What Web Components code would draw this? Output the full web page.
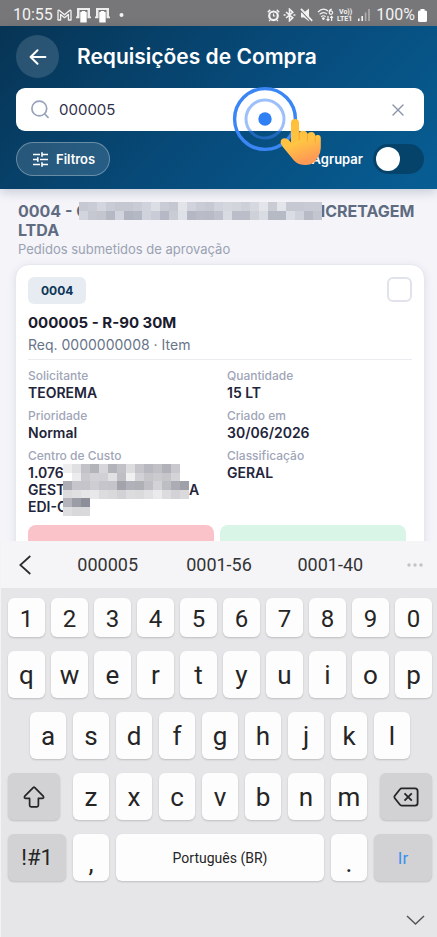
<!DOCTYPE html>
<html lang="pt-BR">
<head>
<meta charset="utf-8">
<meta name="viewport" content="width=device-width, initial-scale=1">
<title>Requisições de Compra</title>
<style>
html, body { margin: 0; height: 100%; }
body { font-family: Inter, "Liberation Sans", sans-serif; background: #f4f4f9; }
</style>
</head>
<body>
<phone-screen>
  <status-bar slot="status"></status-bar>
  <app-header slot="header" heading="Requisições de Compra">
    <search-field value="000005"></search-field>
    <filter-bar slot="tools"></filter-bar>
    <tap-hint slot="hint"></tap-hint>
  </app-header>
  <request-group>
    <request-card code="0004" heading="000005 - R-90 30M" sub="Req. 0000000008 · Item">
      <info-pair label="Solicitante">TEOREMA</info-pair>
      <info-pair label="Quantidade">15 LT</info-pair>
      <info-pair label="Prioridade">Normal</info-pair>
      <info-pair label="Criado em">30/06/2026</info-pair>
      <info-pair label="Centro de Custo">
        <masked-line lead="1.076"><pixel-mask cell="9" rows="eee e0e0e3 c2c2c8 b3b3ba d6d6db b3b3ba c1c1c7 dddde0 c5c5cb b8b8c0 c0c0c6 b1b1b9 c8c8ce/fff ececee cacace d2d2d6 d0d0d5 e1e1e4 bebec5 f0f0f1 d2d2d6 c5c5ca cacacf c5c5ca d3d3d8"></pixel-mask></masked-line>
        <masked-line lead="GEST" tail="A"><pixel-mask cell="9" rows="adadb5 c5c5cb c4c4ca cdcdd2 c5c5cb c4c4ca a3a3ac b1b1b9 afafb6 bfbfc5 d3d3d7 bdbdc4 abacb4 a0a0a9/dcdcdf e0e0e3 e6e6e8 e8e8ea dcdcdf d9d9dc d2d2d6 dcdcdf dadadd e1e1e4 eaeaec dcdcdf d3d3d7 dadadd"></pixel-mask></masked-line>
        <masked-line lead="EDI-C"><pixel-mask cell="9" rows="b3b3bb 9a9ca6 8c8f99/dedee1 d8d8db d9d9dc"></pixel-mask></masked-line>
      </info-pair>
      <info-pair label="Classificação">GERAL</info-pair>
    </request-card>
  </request-group>
  <soft-keyboard slot="keyboard"></soft-keyboard>
</phone-screen>

<script>
class Base extends HTMLElement {
  connectedCallback() {
    if (this.shadowRoot) return;
    this.attachShadow({ mode: 'open' }).innerHTML =
      '<style>:host,*{box-sizing:border-box}button,input{font:inherit;margin:0}svg{display:block;flex:none}' + this.css() + '</style>' + this.html();
  }
  css() { return ''; }
  html() { return '<slot></slot>'; }
  a(n) { return this.getAttribute(n) || ''; }
}
const def = (name, css, html) => customElements.define(name, class extends Base {
  css() { return css; }
  html() { return typeof html === 'function' ? html(this) : html; }
});

def('phone-screen', `
  :host{display:flex;flex-direction:column;height:100vh;overflow:hidden}
  .head{position:relative;z-index:2}
  main{flex:1;min-height:0;overflow:hidden}
`, `<slot name="status"></slot><div class="head"><slot name="header"></slot></div><main><slot></slot></main><slot name="keyboard"></slot>`);

def('status-bar', `
  :host{display:flex;justify-content:space-between;align-items:center;height:26px;padding:4px 10px 0 13px;background:#777779;color:#f3f3f3;font:16px/20px Roboto,sans-serif}
  div{display:flex;align-items:center;gap:4px}
  .r{gap:3px}
  .pct{margin-left:3px}
`, `
  <div><span>10:55</span>
    <svg width="15" height="12" viewBox="0 0 15 12" fill="none" stroke="#f3f3f3" stroke-width="1.3" stroke-linejoin="round"><path d="M1 11V2.2Q1 .8 2.4 1.4L7.5 5.8 12.6 1.4Q14 .8 14 2.2V11H11.4V5.4L7.5 8.7 3.6 5.4V11Z"/></svg>
    <svg width="15" height="15" viewBox="0 0 15 15"><path d="M1 0H14V8.5H15V10.3H11.5V2H3.5V10.3H0V8.5H1Z" fill="#ededee"/><path d="M4.3 4H5.4L6 3H9L9.6 4H10.7V14.6H4.3Z" fill="#fff"/></svg>
    <svg width="15" height="15" viewBox="0 0 15 15"><path d="M1 0H14V8.5H15V10.3H11.5V2H3.5V10.3H0V8.5H1Z" fill="#ededee"/><path d="M4.3 4H5.4L6 3H9L9.6 4H10.7V14.6H4.3Z" fill="#fff"/></svg>
    <svg width="15" height="6" viewBox="0 0 15 6"><circle cx="7.5" cy="3" r="2" fill="#f3f3f3"/></svg>
  </div>
  <div class="r">
    <svg width="13" height="13" viewBox="0 0 13 13" fill="none"><circle cx="6.5" cy="6.8" r="5.4" fill="#f3f3f3"/><path d="M.8 3.2 3.2.9M12.2 3.2 9.8.9M2.2 12.2 3 11M10.8 12.2 10 11" stroke="#f3f3f3" stroke-width="1.5"/><circle cx="6.5" cy="6.8" r="3.2" fill="#777779"/><path d="M6.5 4.6V7H8.3" stroke="#f3f3f3" stroke-width="1.2"/></svg>
    <svg width="13" height="14" viewBox="0 0 13 14" fill="none" stroke="#f3f3f3" stroke-width="1.6"><path d="M3 4 9.8 9.8 6.5 12.8V1.2L9.8 4.2 3 10"/><path d="M.6 7H2.6M10.4 7H12.4"/></svg>
    <svg width="15" height="14" viewBox="0 0 15 14"><path d="M2 4.5H5L10 .5V13.2L5 9.5H2Z" fill="#f3f3f3"/><path d="M1.5 2 12 13.6" stroke="#777779" stroke-width="1.4"/><path d="M2 .8 13.2 12.8" stroke="#f3f3f3" stroke-width="1.7"/></svg>
    <svg width="17" height="14" viewBox="0 0 17 14" fill="none" stroke="#f3f3f3" stroke-width="1.2"><path d="M1 4Q6 -1 11 3M2.6 6.4Q6.3 3 10 6M4.2 8.7Q6.4 6.8 8.6 8.7"/><circle cx="6.4" cy="10.6" r=".8" fill="#f3f3f3"/><path d="M14.8 1.2Q12 2 12.2 4.4M15.6 4.6A1.7 1.7 0 1 1 12.2 4.6A1.7 1.7 0 1 1 15.6 4.6M11 8V12.6M9.6 11.2 11 12.7 12.4 11.2M14.6 13V8.4M13.2 9.8 14.6 8.3 16 9.8"/></svg>
    <svg width="18" height="16" viewBox="0 0 18 16" fill="#f3f3f3" font-family="Roboto,sans-serif" font-weight="700"><text x="2" y="7" font-size="7">Vo))</text><text x="0" y="14" font-size="7">LTE1</text></svg>
    <svg width="12" height="12" viewBox="0 0 12 12" fill="#f3f3f3"><path d="M0 9.5H1.6V12H0ZM3.4 7H5V12H3.4Z"/><path opacity=".45" d="M6.8 3.5H8.4V12H6.8ZM10.2 0H11.8V12H10.2Z"/></svg>
    <span class="pct">100%</span>
    <svg width="9" height="13" viewBox="0 0 9 13"><path d="M2.5 0H6.5V1.5H7.5Q9 1.5 9 3V11.5Q9 13 7.5 13H1.5Q0 13 0 11.5V3Q0 1.5 1.5 1.5H2.5Z" fill="#fff"/></svg>
  </div>`);

def('app-header', `
  :host{display:block;position:relative;padding:9px 13px 13px 16px;background:linear-gradient(135deg,#073454 0%,#074a79 50%,#075e94 100%);box-shadow:0 3px 10px rgba(40,60,90,.22);color:#fff}
  .top{display:flex;align-items:center;gap:18px;margin-bottom:10px}
  button{display:grid;place-items:center;width:43px;height:43px;padding:0;border:0;border-radius:50%;background:rgba(255,255,255,.14)}
  h1{margin:0;font-size:21px;line-height:28px;font-weight:600}
`, e => `<div class="top"><button aria-label="Voltar"><svg width="18" height="16" viewBox="0 0 18 16" fill="none" stroke="#fff" stroke-width="2" stroke-linecap="round" stroke-linejoin="round"><path d="M8.5 1.2 1.6 8 8.5 14.8M1.6 8H16.4"/></svg></button><h1>${e.a('heading')}</h1></div><slot></slot><slot name="tools"></slot><slot name="hint"></slot>`);

def('search-field', `
  :host{display:flex;align-items:center;height:43px;margin-bottom:11px;padding:0 15px;gap:10px;border-radius:9px;background:#fff}
  input{flex:1;min-width:0;padding:0;border:0;outline:0;background:none;color:#30304a;font-size:15px;line-height:20px}
  button{display:grid;place-items:center;width:22px;height:22px;padding:0;border:0;background:none}
`, e => `<svg width="18" height="19" viewBox="0 0 18 19" fill="none" stroke="#98a3bb" stroke-width="1.7" stroke-linecap="round"><circle cx="8.3" cy="8.5" r="7.4"/><path d="M13.8 14 17 17.4"/></svg>
  <input type="text" aria-label="Buscar" value="${e.a('value')}">
  <button aria-label="Limpar"><svg width="12" height="12" viewBox="0 0 12 12" stroke="#8a92a8" stroke-width="1.4" stroke-linecap="round"><path d="M1 1 11 11M11 1 1 11"/></svg></button>`);

def('filter-bar', `
  :host{display:flex;align-items:center;justify-content:space-between;font-size:13px;line-height:18px;font-weight:600}
  button{display:flex;align-items:center;gap:8px;height:34px;padding:0 14px 0 16px;border:1px solid rgba(255,255,255,.3);border-radius:17px;background:rgba(255,255,255,.13);color:#fff}
  label{display:flex;align-items:center;gap:10px}
  input{appearance:none;display:block;width:51px;height:30px;padding:3px;border-radius:15px;background:#06436b}
  input::before{content:"";display:block;width:24px;height:24px;border-radius:50%;background:#fff}
`, `<button><svg width="15" height="15" viewBox="0 0 15 15" fill="none" stroke="#fff" stroke-width="1.6"><path d="M0 2.5H7M9 2.5H15M9 .2V4.8M0 7.5H4.8M4.8 5.2V9.8M7 7.5H15M0 12.5H7M9 12.5H15M9 10.2V14.8"/></svg>Filtros</button><label>Agrupar<input type="checkbox" role="switch"></label>`);

def('tap-hint', `
  :host{position:absolute;left:232px;top:60px;pointer-events:none}
`, `<svg width="92" height="82" viewBox="0 0 92 82" fill="none"><defs>
  <linearGradient id="g" x1="0" y1="0" x2=".3" y2="1"><stop offset="0" stop-color="#ffbd35"/><stop offset=".6" stop-color="#ffc444"/><stop offset="1" stop-color="#ff9a55"/></linearGradient></defs>
  <circle cx="33" cy="33" r="30.4" stroke="#3a86f4" stroke-width="3.4"/><circle cx="33" cy="33" r="19" stroke="#3b82f6" stroke-opacity=".5" stroke-width="3"/><circle cx="33" cy="33" r="6.7" fill="#3080f5"/>
  <path d="M59 37Q59 33 63 33Q67 33 67 37L67.3 47Q68 44.8 71 44.8Q74.4 44.8 75.6 48Q76.5 46 79.5 46Q82.6 46 83.5 50Q84.5 48.5 86.5 49Q89 49.5 88.8 53V62Q88.6 67 86 71Q82 79 74 79Q66 79 62 74.5L50.5 60.5Q47 55.5 50 53Q53.5 50.8 57 54.3L59 56.5Z" fill="url(#g)"/>
  <path d="M67.2 46V54M75.4 48V55M83.2 50V56" stroke="#ef9b2e" stroke-width="1" stroke-opacity=".7" stroke-linecap="round"/></svg>`);

customElements.define('pixel-mask', class extends Base {
  css() { return ':host{display:block;flex:none;position:relative;z-index:1}'; }
  html() {
    const s = +this.a('cell'), rows = this.a('rows').split('/').map(r => r.split(' '));
    const w = rows[0].length * s, h = rows.length * s;
    return `<svg width="${w}" height="${h}" shape-rendering="crispEdges" aria-hidden="true">` +
      rows.map((r, y) => r.map((c, x) => `<rect x="${x * s}" y="${y * s}" width="${s}" height="${s}" fill="#${c}"/>`).join('')).join('') + '</svg>';
  }
});

def('masked-line', `
  :host{display:flex;height:17px}
  .lead{width:35px;white-space:nowrap}
`, e => `<span class="lead">${e.a('lead')}</span><slot></slot><span>${e.a('tail')}</span>`);

def('request-group', `
  :host{display:block;padding:13px 12px 0 15px}
  h2{margin:0 3px;font-size:16px;line-height:19px;font-weight:700;color:#5f6b80}
  .line{display:flex}
  .lead{width:61px;white-space:nowrap}
  .tail{margin-left:-9px}
  pixel-mask{height:18px}
  p{margin:0 3px 6px;font-size:13px;line-height:18px;color:#9aa2b1}
`, `<h2><span class="line"><span class="lead">0004 - C</span><pixel-mask cell="9" rows="c6c9d2 c9ccd5 d3d6df c9ccd5 c5c8d1 c5c8d1 c9ccd5 d0d3dc dcdee5 c9ccd5 c5c8d1 e3e4ea d0d3dc c9ccd5 c6c9d2 d0d3dc d5d7df d2d5dc cdd0d8 d5d8df e4e5ea c9ccd3 e4e5ea c6c8d2 c6c9d2 c8cbd4 c8cbd4/d2d4de c6c8d1 c3c6cf b5b9c4 d1d4dd b1b5c2 b4b7c4 d1d3dc c9ccd6 b6b9c5 c9ccd5 dfe1e8 b5b8c4 b9bcc7 b8bbc6 bfc2cc d9dbe2 bbbec8 bbbec8 cfd1d9 dadce4 b6bac5 b6bac5 dadde4 cfd2da b8bbc6 c3c6cf"></pixel-mask><span class="tail">NCRETAGEM</span></span>LTDA</h2>
  <p>Pedidos submetidos de aprovação</p><slot></slot>`);

def('request-card', `
  :host{display:block;padding:12px 12px 16px;border:1px solid #e6e8ef;border-radius:14px;background:#fff;box-shadow:0 2px 8px rgba(50,60,100,.1)}
  header{display:flex;justify-content:space-between;align-items:flex-start;height:27px;margin-bottom:8px}
  .code{padding:0 13px;border-radius:6px;background:#e7ecf3;color:#0d3557;font-size:12px;line-height:27px;font-weight:700}
  input{appearance:none;width:25px;height:25px;border:2px solid #e1e3ec;border-radius:6px;background:#fff}
  h3{margin:0;font-size:15px;line-height:22px;font-weight:700;color:#1b1b2e}
  p{margin:0 0 3px;font-size:14px;line-height:22px;color:#68748a}
  .grid{display:grid;grid-template-columns:1fr 1fr;gap:7px 14px;padding-top:8px;border-top:1px solid #ebecf0}
  .acts{display:grid;grid-template-columns:1fr 1fr;gap:6px;margin:10px 6px 0 0}
  button{display:flex;align-items:center;justify-content:center;gap:6px;height:42px;padding:0;border:0;border-radius:8px;font-size:14px;font-weight:600}
  .no{background:#fac3ca;color:#e8899a}.yes{background:#d9f5e7;color:#7fcfa8}
`, e => `<header><span class="code">${e.a('code')}</span><input type="checkbox" aria-label="Selecionar requisição"></header>
  <h3>${e.a('heading')}</h3><p>${e.a('sub')}</p>
  <div class="grid"><slot></slot></div>
  <div class="acts"><button class="no"><svg width="13" height="13" viewBox="0 0 13 13" stroke="currentColor" stroke-width="2" stroke-linecap="round"><path d="M2 2 11 11M11 2 2 11"/></svg>Rejeitar</button><button class="yes"><svg width="13" height="13" viewBox="0 0 13 13" fill="none" stroke="currentColor" stroke-width="2" stroke-linecap="round"><path d="M1 7 4.5 10.5 12 3"/></svg>Aprovar</button></div>`);

def('info-pair', `
  :host{display:block}
  .l{font-size:12px;line-height:16px;font-weight:500;color:#a0a5b8}
  .v{font-size:14px;line-height:17px;font-weight:600;color:#22243a}
`, e => `<div class="l">${e.a('label')}</div><div class="v"><slot></slot></div>`);

def('key-cap', `
  :host{display:flex;flex:var(--w,36) 1 0;min-width:0;height:47px}
  :host([short]){height:39px}
  button{flex:1;min-width:0;display:grid;place-items:center;padding:0;border:0;border-radius:6px;background:#fdfdfe;box-shadow:0 1px 2px rgba(0,0,0,.18);color:#252525;font:26px/30px Roboto,sans-serif;white-space:nowrap}
  :host([short]) button{font-size:24px;padding:2px 0 0}
  :host([dark]) button{background:#d2d2d4}
  :host([sym]) button{font-size:22px}
  :host([space]) button{font-size:14px}
  :host([go]) button{font-size:17px;color:#3c8ff0}
  :host([low]) button{padding-top:10px}
`, e => `<button aria-label="${e.a('name') || e.textContent}"><slot></slot></button>`);

def('soft-keyboard', `
  :host{display:block;background:#e6e6e8;color:#333;font-family:Roboto,sans-serif;border-left:1px solid #f3f3f4}
  nav{display:flex;align-items:center;justify-content:space-between;height:47px;padding:0 13px 0 17px;background:#f5f5f8}
  nav button{padding:0;border:0;background:none;color:inherit;font-size:18px;line-height:24px}
  .words{display:flex;flex:1;margin:0 20px}
  .words button{flex:1}
  .row{display:flex;gap:7px}
  .keys{display:flex;flex-direction:column;gap:14px;padding:10px 5px 0 7px}
  .num{gap:6px}.mid{padding:0 22px}.low{gap:13px}
  .letters{display:flex;gap:7px;flex:294 1 0;min-width:0}
  footer{display:flex;justify-content:flex-end;padding:31px 12px 9px}
  footer button{padding:0;border:0;background:none}
`, () => {
  const k = (s, at = '') => [...s].map(c => `<key-cap ${at}>${c}</key-cap>`).join('');
  return `<nav aria-label="Sugestões">
    <button aria-label="Recolher"><svg width="14" height="22" viewBox="0 0 14 22" fill="none" stroke="#2b2b2b" stroke-width="1.7"><path d="M12.3 2 2.3 11 12.3 20"/></svg></button>
    <div class="words"><button>000005</button><button>0001-56</button><button>0001-40</button></div>
    <button aria-label="Mais"><svg width="18" height="6" viewBox="0 0 18 6" fill="#c3c3c6"><circle cx="3" cy="3" r="1.7"/><circle cx="9" cy="3" r="1.7"/><circle cx="15" cy="3" r="1.7"/></svg></button></nav>
  <div class="keys">
    <div class="row num">${k('1234567890', 'short')}</div>
    <div class="row num">${k('qwertyuiop')}</div>
    <div class="row mid">${k('asdfghjkl')}</div>
    <div class="row low"><key-cap dark name="Maiúsculas" style="--w:52"><svg width="22" height="22" viewBox="0 0 22 22" fill="none" stroke="#252525" stroke-width="1.7" stroke-linejoin="round"><path d="M10.2 1.6Q11 .9 11.8 1.6L20.2 10.2Q21.3 12.4 19 12.4H15.4V19.3Q15.4 20.8 13.9 20.8H8.1Q6.6 20.8 6.6 19.3V12.4H3Q.7 12.4 1.8 10.2Z"/></svg></key-cap>
      <div class="letters">${k('zxcvbnm')}</div>
      <key-cap dark name="Apagar" style="--w:52"><svg width="26" height="20" viewBox="0 0 26 20" fill="none" stroke="#252525" stroke-width="1.8" stroke-linejoin="round"><path d="M8.6 1.4H22Q24.6 1.4 24.6 4V16Q24.6 18.6 22 18.6H8.6Q7.6 18.6 7 17.8L1.8 11.2Q1 10 1.8 8.8L7 2.2Q7.6 1.4 8.6 1.4Z"/><path d="M11.5 6.3 18.8 13.7M18.8 6.3 11.5 13.7"/></svg></key-cap></div>
    <div class="row"><key-cap dark sym style="--w:58">!#1</key-cap><key-cap low>,</key-cap><key-cap space style="--w:208">Português (BR)</key-cap><key-cap low>.</key-cap><key-cap dark go style="--w:58">Ir</key-cap></div>
  </div>
  <footer><button aria-label="Ocultar teclado"><svg width="19" height="16" viewBox="0 0 19 16" fill="none" stroke="#555" stroke-width="1.5"><path d="M1 4 9.5 12 18 4"/></svg></button></footer>`;
});
</script>
</body>
</html>
